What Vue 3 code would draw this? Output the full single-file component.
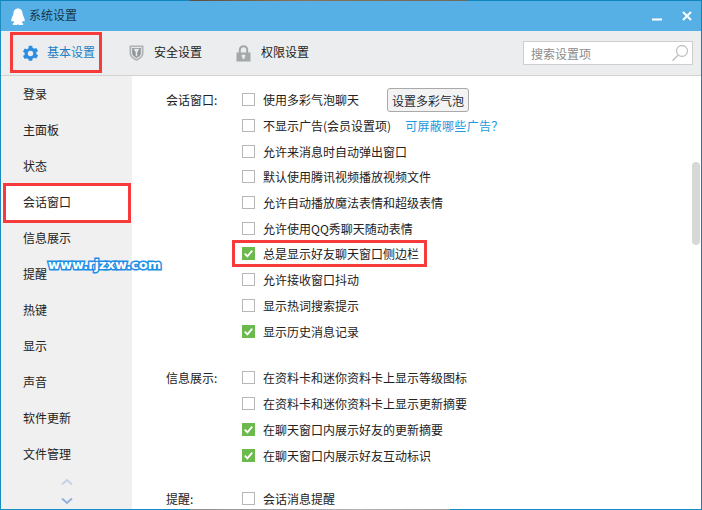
<script setup>
const tabs = [
  { name: '基本设置', icon: 'gear', active: true },
  { name: '安全设置', icon: 'shield' },
  { name: '权限设置', icon: 'lock' }
]
const sideItems = ['登录', '主面板', '状态', '会话窗口', '信息展示', '提醒', '热键', '显示', '声音', '软件更新', '文件管理']
const sections = [
  {
    label: '会话窗口:',
    rows: [
      { text: '使用多彩气泡聊天', button: '设置多彩气泡' },
      { text: '不显示广告(会员设置项)', link: '可屏蔽哪些广告？' },
      { text: '允许来消息时自动弹出窗口' },
      { text: '默认使用腾讯视频播放视频文件' },
      { text: '允许自动播放魔法表情和超级表情' },
      { text: '允许使用QQ秀聊天随动表情' },
      { text: '总是显示好友聊天窗口侧边栏', checked: true, marked: true },
      { text: '允许接收窗口抖动' },
      { text: '显示热词搜索提示' },
      { text: '显示历史消息记录', checked: true }
    ]
  },
  {
    label: '信息展示:',
    rows: [
      { text: '在资料卡和迷你资料卡上显示等级图标' },
      { text: '在资料卡和迷你资料卡上显示更新摘要' },
      { text: '在聊天窗口内展示好友的更新摘要', checked: true },
      { text: '在聊天窗口内展示好友互动标识', checked: true }
    ]
  },
  {
    label: '提醒:',
    rows: [{ text: '会话消息提醒' }]
  }
]
</script>

<template>
  <div class="window">
    <div class="edge edge-top"></div>
    <header class="titlebar">
      <svg class="penguin" width="16" height="18" viewBox="0 0 16 18">
        <path fill="#fff" d="M8 0.5C4.9 0.5 3.5 3 3.4 5.6 3.3 7 2.8 7.8 2.2 9 1.4 10.6 1 12.3 1.6 13.4 2 13.9 2.7 13.2 3.1 12.5 3.3 13.4 3.7 14.2 4.3 14.8 3.3 15.2 2.4 15.7 2.7 16.4 3.1 17.2 5.6 17.3 8 16.4 10.4 17.3 12.9 17.2 13.3 16.4 13.6 15.7 12.7 15.2 11.7 14.8 12.3 14.2 12.7 13.4 12.9 12.5 13.3 13.2 14 13.9 14.4 13.4 15 12.3 14.6 10.6 13.8 9 13.2 7.8 12.7 7 12.6 5.6 12.5 3 11.1 0.5 8 0.5Z"/>
      </svg>
      <span class="title">系统设置</span>
      <svg class="win-btn min" width="10" height="3" viewBox="0 0 10 3"><rect width="10" height="2" y="0.5" fill="#fff"/></svg>
      <svg class="win-btn close" width="10" height="10" viewBox="0 0 10 10"><path d="M1 1L9 9M9 1L1 9" stroke="#fff" stroke-width="2" fill="none"/></svg>
    </header>

    <nav class="tabbar">
      <div v-for="t in tabs" :key="t.name" class="tab" :class="{ active: t.active }">
        <svg v-if="t.icon === 'gear'" class="tab-icon" width="17" height="17" viewBox="0 0 24 24">
          <path fill="#2b8ee0" fill-rule="evenodd" d="M9.6 1h4.8l.6 3.1c.8.3 1.5.7 2.2 1.2l3-1.1 2.4 4.1-2.4 2.1c.1.8.1 1.6 0 2.4l2.4 2.1-2.4 4.1-3-1.1c-.7.5-1.4.9-2.2 1.2l-.6 3.1H9.6L9 19.9c-.8-.3-1.5-.7-2.2-1.2l-3 1.1-2.4-4.1 2.4-2.1c-.1-.8-.1-1.6 0-2.4L1.4 9.1l2.4-4.1 3 1.1C7.5 5.6 8.2 5.2 9 4.900zM12 8.200a3.800 3.800 0 1 0 0 7.600 3.800 3.800 0 0 0 0-7.600z"/>
        </svg>
        <svg v-else-if="t.icon === 'shield'" class="tab-icon" width="15" height="16" viewBox="0 0 15 16">
          <path fill="#aeb3b6" d="M0.5 0.5H14.500V8.500C14.500 11.800 11 14.300 7.500 15.800 4 14.300 0.500 11.800 0.500 8.500Z"/>
          <path fill="#e6e8e9" d="M2.200 2H12.800V8.400C12.800 10.800 10.200 12.800 7.500 14 4.800 12.800 2.200 10.800 2.200 8.400Z"/>
          <path fill="#8f9599" d="M3.200 3H11.800V8.200C11.800 10.200 9.600 11.900 7.500 12.900 5.400 11.900 3.200 10.200 3.200 8.200Z"/>
          <path fill="#e6e8e9" d="M4.600 3.800H10.400L8.300 7.200V11.300H6.700V7.200Z"/>
        </svg>
        <svg v-else class="tab-icon" width="15" height="17" viewBox="0 0 15 17">
          <path fill="none" stroke="#a3a8ab" stroke-width="2" d="M3.800 8V5C3.800 2.800 5.400 1.200 7.500 1.200S11.200 2.800 11.200 5V8"/>
          <rect x="0.500" y="7.500" width="14" height="9" fill="#a3a8ab"/>
          <rect x="6.500" y="10" width="2" height="4" fill="#ecedee"/>
          <rect x="5.700" y="9.800" width="3.600" height="2" fill="#ecedee"/>
        </svg>
        <span class="tab-text">{{ t.name }}</span>
        <i v-if="t.active" class="mark mark-tab"></i>
      </div>
      <div class="search">
        <span class="placeholder">搜索设置项</span>
        <svg width="18" height="18" viewBox="0 0 18 18">
          <circle cx="11" cy="7" r="5.500" fill="none" stroke="#c2c2c2" stroke-width="1.300"/>
          <path d="M7 11.200L1.500 16.800" stroke="#c2c2c2" stroke-width="1.600" fill="none"/>
        </svg>
      </div>
    </nav>

    <main class="body">
      <aside class="side">
        <div v-for="s in sideItems" :key="s" class="side-item" :class="{ current: s === '会话窗口' }">
          {{ s }}
          <i v-if="s === '会话窗口'" class="mark mark-side"></i>
        </div>
        <div class="arrows">
          <svg width="12" height="8" viewBox="0 0 12 8"><path d="M1 6.500L6 2l5 4.500" fill="none" stroke="#c5d3e6" stroke-width="2"/></svg>
          <svg width="12" height="8" viewBox="0 0 12 8"><path d="M1 1.500L6 6l5-4.500" fill="none" stroke="#94b1de" stroke-width="2"/></svg>
        </div>
      </aside>

      <section class="content">
        <div v-for="sec in sections" :key="sec.label" class="group">
          <div class="group-label">{{ sec.label }}</div>
          <div class="rows">
            <div v-for="r in sec.rows" :key="r.text" class="row">
              <span class="box" :class="{ on: r.checked }">
                <svg v-if="r.checked" width="13" height="13" viewBox="0 0 14 14">
                  <path d="M3 7.200L5.800 10 11 3.800" fill="none" stroke="#fff" stroke-width="2"/>
                </svg>
              </span>
              <span class="row-text">{{ r.text }}</span>
              <button v-if="r.button" class="btn" type="button">{{ r.button }}</button>
              <span v-if="r.link" class="link">{{ r.link }}</span>
              <i v-if="r.marked" class="mark mark-row"></i>
            </div>
          </div>
        </div>
        <div class="scrollbar"></div>
      </section>
    </main>
    <div class="edge edge-bottom"></div>
    <div class="watermark">www.rjzxw.com</div>
  </div>
</template>

<style>
html, body { margin: 0; overflow: hidden; background: #fff; }
</style>

<style scoped>
.window {
  position: relative;
  width: 702px;
  height: 510px;
  box-sizing: border-box;
  display: flex;
  flex-direction: column;
  overflow: hidden;
  border-left: 1px solid #1a8cc0;
  border-right: 1px solid #1a7fae;
  background: #fff;
  font-family: "Noto Sans CJK SC", "Liberation Sans", sans-serif;
  font-size: 12px;
  color: #222;
}
.edge { height: 1px; flex: none; }
.edge-top {
  background: linear-gradient(90deg, #0f86bb 0, #0f86bb 189px, #5a5040 189px, #8a7258 300px, #6d6a5a 467px, #0f86bb 467px);
}
.edge-bottom {
  background: linear-gradient(90deg, #1a8cc0 0, #1a8cc0 189px, #8f8f8f 189px, #b5b5b5 360px, #9a9a9a 449px, #1a8cc0 449px);
}
.titlebar {
  flex: none;
  height: 30px;
  display: flex;
  align-items: center;
  background: #56b0e6;
  padding: 0 9px;
  color: #14344a;
}
.penguin { flex: none; margin-right: 3px; margin-top: 1px; }
.title { flex: 1; margin-top: -3px; }
.win-btn { flex: none; }
.min { margin-top: 6px; margin-right: 20px; }
.close { margin-top: -1px; }
.tabbar {
  flex: none;
  height: 44px;
  display: flex;
  align-items: center;
  background: #ecedee;
  border-bottom: 1px solid #d2d2d2;
  padding: 0 8px 0 21px;
}
.tab {
  position: relative;
  width: 107px;
  height: 100%;
  display: flex;
  align-items: center;
  flex: none;
}
.tab-icon { flex: none; }
.tab-text { position: absolute; left: 25px; top: 5px; line-height: 32px; white-space: nowrap; }
.tab.active .tab-text { color: #1a7fc4; }
.search {
  margin-left: auto;
  width: 170px;
  height: 24px;
  box-sizing: border-box;
  background: #fff;
  border: 1px solid #cfcfcf;
  display: flex;
  align-items: center;
  justify-content: space-between;
  padding: 0 3px 0 7px;
}
.placeholder { color: #8a8a8a; }
.body {
  flex: 1;
  min-height: 0;
  display: flex;
}
.side {
  flex: none;
  width: 131px;
  background: #f0f0f0;
  display: flex;
  flex-direction: column;
}
.side-item {
  position: relative;
  height: 36px;
  line-height: 36px;
  padding-left: 22px;
  flex: none;
}
.side-item.current { background: #fff; }
.arrows {
  display: flex;
  flex-direction: column;
  align-items: center;
  gap: 11px;
  margin-top: 6px;
}
.content {
  position: relative;
  flex: 1;
  min-width: 0;
  overflow: hidden;
  padding: 11px 0 0 34px;
}
.group { display: flex; }
.group + .group { margin-top: 21px; }
.group:nth-child(3) { margin-top: 17px; }
.group-label { width: 76px; flex: none; line-height: 26px; }
.rows { flex: 1; }
.row {
  position: relative;
  height: 26px;
  display: flex;
  align-items: center;
}
.group:first-child .row { height: 25.7px; }
.box {
  width: 11px;
  height: 11px;
  flex: none;
  border: 1px solid #b7b7b7;
  background: #fff;
  margin-right: 8px;
  display: inline-flex;
}
.box.on { border: 0; background: #6cb94d; width: 13px; height: 13px; }
.row-text { white-space: nowrap; }
.btn {
  position: absolute;
  left: 145px;
  top: 1px;
  width: 82px;
  height: 24px;
  padding: 0;
  font: inherit;
  color: #1b2a36;
  background: #f3f3f3;
  border: 1px solid #a9a9a9;
  border-radius: 3px;
}
.link { color: #1b9ae0; margin-left: 14px; letter-spacing: 0.3px; white-space: nowrap; }
.scrollbar {
  position: absolute;
  right: 1px;
  top: 86px;
  width: 8px;
  height: 83px;
  border-radius: 4px;
  background: #d8d8d8;
}
.mark {
  position: absolute;
  display: block;
  border: 3px solid #f73a3a;
  box-sizing: border-box;
  pointer-events: none;
}
.mark-tab { left: -12px; top: 1px; width: 92px; height: 41px; }
.mark-side { left: 2px; top: -1px; width: 128px; height: 40px; }
.mark-row { left: -10px; top: -1px; width: 195px; height: 27px; }
.watermark {
  position: absolute;
  left: 47px;
  top: 256px;
  font-family: "DejaVu Sans", sans-serif;
  font-weight: 700;
  font-size: 13px;
  line-height: 17px;
  color: #fff;
  -webkit-text-stroke: 3px #1f8fe6;
  paint-order: stroke fill;
  white-space: nowrap;
}
</style>
